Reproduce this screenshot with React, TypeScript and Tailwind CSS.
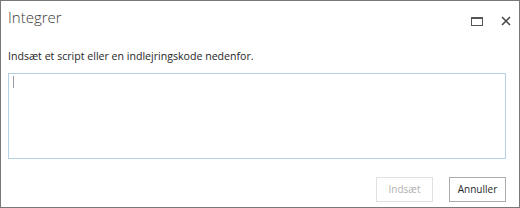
import React from "react";

export default function App() {
  return (
    <div className="w-[520px] h-[208px] border border-[#7b7677] bg-white relative" style={{ fontFamily: '"Open Sans", "Noto Sans", sans-serif' }}>
      <div className="flex items-start justify-between pl-[7px] pr-[8px]">
        <div className="pt-[5px] text-[15px] leading-[22px] font-light text-[#3a3a3a]">Integrer</div>
        <div className="flex items-center gap-[18px] pt-[15px]">
          <svg width="12" height="9" viewBox="0 0 12 9" className="block">
            <rect x="0.5" y="0.5" width="11" height="8" fill="none" stroke="#555" strokeWidth="1" />
            <rect x="0" y="0" width="12" height="2" fill="#555" />
          </svg>
          <svg width="10" height="10" viewBox="0 0 10 10" className="block">
            <path d="M1 1 L9 9 M9 1 L1 9" stroke="#444" strokeWidth="1.5" />
          </svg>
        </div>
      </div>
      <div className="pl-[7px] mt-[21px] text-[10.6px] leading-[14px] text-[#262626]">
        Indsæt et script eller en indlejringskode nedenfor.
      </div>
      <div className="ml-[7px] mt-[10px] w-[498px] h-[86px] border border-[#b4d2e5] relative">
        <div className="absolute left-[4px] top-[2px] w-px h-[12px] bg-[#999]" />
      </div>
      <div className="flex justify-end gap-[16px] pr-[13px] mt-[18px]">
        <div className="w-[57px] h-[25px] border border-[#e1e1e1] flex items-center justify-center text-[10px] text-[#b0b0b0]">Indsæt</div>
        <div className="w-[57px] h-[25px] border border-[#ababab] flex items-center justify-center text-[10px] text-[#262626]">Annuller</div>
      </div>
    </div>
  );
}
